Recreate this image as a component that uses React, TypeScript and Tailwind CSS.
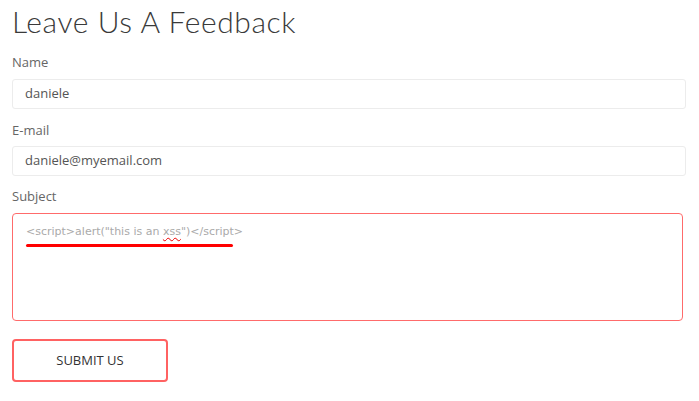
export default function App() {
  return (
    <main className="min-h-screen bg-white px-3 font-['Open_Sans',sans-serif]">
      <h1 className="pt-[3px] font-['Lato',sans-serif] text-[30px] leading-[36px] font-light tracking-[0.6px] text-[#3a3a3a]">
        Leave Us A Feedback
      </h1>

      <form className="mt-[14px] grid w-[674px]">
        <label className="text-[13px] leading-[18px] text-[#666]">Name</label>
        <div className="mt-[8px] flex h-[30px] items-center rounded-[3px] border border-[#ececec] px-3 text-[13px] text-[#555]">
          daniele
        </div>

        <label className="mt-[12px] text-[13px] leading-[18px] text-[#666]">E-mail</label>
        <div className="mt-[7px] flex h-[30px] items-center rounded-[3px] border border-[#ececec] px-3 text-[13px] text-[#555]">
          daniele@myemail.com
        </div>

        <label className="mt-[11px] text-[13px] leading-[18px] text-[#666]">Subject</label>
        <div className="relative mt-[8px] h-[108px] w-[671px] rounded-[4px] border border-[#ff6b6b] px-[13px] pt-[11px] font-['DejaVu_Sans',sans-serif] text-[11px] leading-[14px] text-[#aaa]">
          <span>
            &lt;script&gt;alert("this is an{" "}
            <span className="underline decoration-[#e00] decoration-wavy decoration-1 underline-offset-2">xss</span>
            ")&lt;/script&gt;
          </span>
          <div className="mt-[5px] h-[3px] w-[207px] rounded-full bg-[#f00]" />
        </div>

        <button
          type="button"
          className="mt-[18px] h-[43px] w-[156px] rounded-[4px] border-2 border-[#ff6262] text-[13px] text-[#333]"
        >
          SUBMIT US
        </button>
      </form>
    </main>
  );
}
